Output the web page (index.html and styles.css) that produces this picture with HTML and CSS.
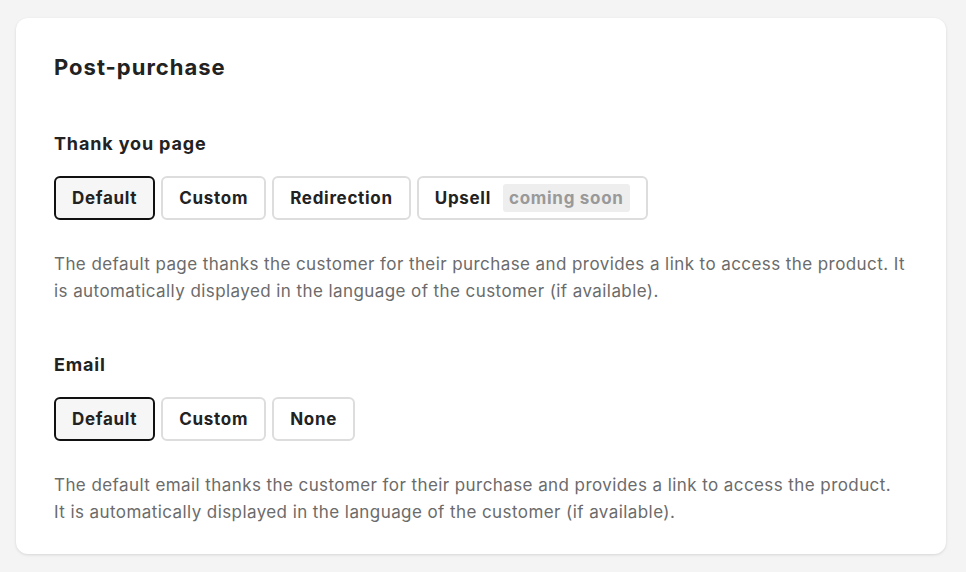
FILE: index.html
```html
<!DOCTYPE html>
<html>
<head>
<meta charset="utf-8">
<link rel="stylesheet" href="styles.css">
</head>
<body>
<div class="card">
  <h1 class="title">Post-purchase</h1>
  <section class="section">
    <h2 class="label">Thank you page</h2>
    <div class="options">
      <button class="opt selected">Default</button>
      <button class="opt">Custom</button>
      <button class="opt">Redirection</button>
      <button class="opt">Upsell <span class="badge">coming soon</span></button>
    </div>
    <p class="desc">The default page thanks the customer for their purchase and provides a link to access the product. It<br>is automatically displayed in the language of the customer (if available).</p>
  </section>
  <section class="section">
    <h2 class="label">Email</h2>
    <div class="options">
      <button class="opt selected">Default</button>
      <button class="opt">Custom</button>
      <button class="opt">None</button>
    </div>
    <p class="desc">The default email thanks the customer for their purchase and provides a link to access the product.<br>It is automatically displayed in the language of the customer (if available).</p>
  </section>
</div>
</body>
</html>
```
FILE: styles.css
```css
html, body {
  margin: 0;
  padding: 0;
  background: #f4f4f4;
  font-family: Inter, "Noto Sans", sans-serif;
  color: #222;
}
body {
  padding: 18px 20px 19px 16px;
}
.card {
  background: #fff;
  border-radius: 12px;
  box-shadow: 0 1px 3px rgba(0,0,0,0.12);
  padding: 35px 38px 28px 38px;
  width: 854px;
}
.title {
  margin: 0;
  font-size: 22px;
  font-weight: 700;
  line-height: 28px;
  letter-spacing: 1px;
  color: #222;
}
.section {
  margin-top: 51px;
}
.section + .section {
  margin-top: 48px;
}
.label {
  margin: 0 0 20px 0;
  font-size: 18px;
  font-weight: 700;
  line-height: 24px;
  letter-spacing: 0.85px;
  color: #222;
}
.options {
  display: flex;
  gap: 6px;
}
.opt {
  font-family: inherit;
  font-size: 17px;
  font-weight: 700;
  letter-spacing: 0.7px;
  color: #222;
  background: #fff;
  border: 2px solid #ddd;
  border-radius: 6px;
  height: 44px;
  padding: 0 16px;
  display: flex;
  align-items: center;
  gap: 12px;
}
.opt.selected {
  border-color: #111;
  background: #f6f6f6;
}
.badge {
  background: #eee;
  color: #999;
  border-radius: 3px;
  padding: 0 6px;
  line-height: 28px;
}
.desc {
  margin: 31px 0 0 0;
  font-size: 17px;
  line-height: 27px;
  letter-spacing: 0.42px;
  white-space: nowrap;
  color: #6b6b6b;
}
```
